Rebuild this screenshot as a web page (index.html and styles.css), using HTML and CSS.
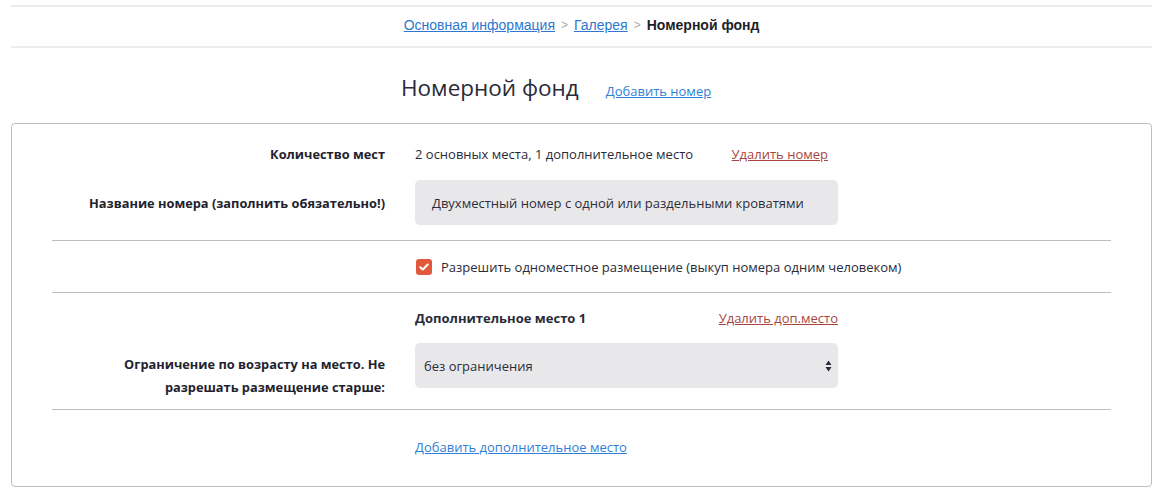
FILE: index.html
```html
<!DOCTYPE html>
<html lang="ru">
<head>
<meta charset="utf-8">
<link rel="stylesheet" href="styles.css">
</head>
<body>
<div class="page">
  <nav class="crumbs">
    <a href="#">Основная информация</a><span class="sep">&gt;</span><a href="#">Галерея</a><span class="sep">&gt;</span><b>Номерной фонд</b>
  </nav>
  <div class="head">
    <h1>Номерной фонд</h1>
    <a href="#" class="link">Добавить номер</a>
  </div>
  <section class="card">
    <div class="block first">
      <div class="row">
        <div class="label">Количество мест</div>
        <div class="value split"><span>2 основных места, 1 дополнительное место</span><a href="#" class="del">Удалить номер</a></div>
      </div>
      <div class="row">
        <div class="label">Название номера (заполнить обязательно!)</div>
        <div class="value"><div class="field">Двухместный номер с одной или раздельными кроватями</div></div>
      </div>
    </div>
    <div class="block check-block">
      <div class="row">
        <div class="label"></div>
        <label class="value check"><span class="box"><svg width="10" height="8" viewBox="0 0 10 8"><path d="M1.3 4.2 L3.8 6.5 L8.7 1.5" fill="none" stroke="#fff" stroke-width="2" stroke-linecap="round" stroke-linejoin="round"/></svg></span>Разрешить одноместное размещение (выкуп номера одним человеком)</label>
      </div>
    </div>
    <div class="block extra">
      <div class="row">
        <div class="label"></div>
        <div class="value split full"><b>Дополнительное место 1</b><a href="#" class="del">Удалить доп.место</a></div>
      </div>
      <div class="row">
        <div class="label two">Ограничение по возрасту на место. Не разрешать размещение старше:</div>
        <div class="value"><div class="field select">без ограничения<svg class="arrows" width="7" height="12" viewBox="0 0 7 12"><path d="M3.5 0.5 L6.5 5 L0.5 5 Z M3.5 11.5 L6.5 7 L0.5 7 Z" fill="#2b2b38"/></svg></div></div>
      </div>
    </div>
    <div class="block last">
      <div class="row">
        <div class="label"></div>
        <div class="value"><a href="#" class="link">Добавить дополнительное место</a></div>
      </div>
    </div>
  </section>
</div>
</body>
</html>
```
FILE: styles.css
```css
* { box-sizing: border-box; }
body {
  margin: 0;
  background: #fff;
  font-family: "Open Sans", "Noto Sans", sans-serif;
  color: #2b2b38;
  font-size: 13px;
}
.page {
  padding: 5px 11px 0 11px;
}
.crumbs {
  border-top: 2px solid #ececec;
  border-bottom: 2px solid #ececec;
  height: 43px;
  display: flex;
  justify-content: center;
  align-items: center;
  font-family: "Liberation Sans", Arial, sans-serif;
  font-size: 14px;
  padding-bottom: 3px;
}
.crumbs a { color: #2f78d1; }
.crumbs .sep { color: #a9a9a9; margin: 0 6px; font-size: 12px; }
.crumbs b { color: #1e1e28; }
.head {
  display: flex;
  align-items: baseline;
  padding-left: 390px;
  height: 75px;
  padding-top: 24px;
}
h1 {
  margin: 0;
  font-weight: 400;
  font-size: 22.5px;
  color: #2a2a38;
}
.link {
  color: #2f7fd6;
  margin-left: 27px;
  font-size: 13px;
}
.value .link { margin-left: 0; }
.card {
  border: 1px solid #bdbdc2;
  border-radius: 4px;
  padding: 0 40px;
  height: 364px;
}
.block {
  border-bottom: 1px solid #bdbdc2;
  display: flex;
  flex-direction: column;
}
.block.first { padding: 21px 0 15px; gap: 17px; }
.check-block { padding: 17px 0 16px; }
.block.extra { padding: 16px 0 0; gap: 16px; }
.block.last { border-bottom: none; padding-top: 28px; }
.row {
  display: grid;
  grid-template-columns: 333px 423px;
  column-gap: 30px;
  align-items: center;
  line-height: 18px;
}
.label {
  text-align: right;
  font-weight: 700;
  font-size: 12.8px;
  color: #22222e;
}
.label.two { line-height: 23px; align-self: start; padding: 10px 0 10px; }
.split {
  display: flex;
  justify-content: space-between;
  padding-right: 10px;
}
.split.full { padding-right: 0; }
.del { color: #a8453f; }
.field {
  background: #e8e8eb;
  border-radius: 5px;
  height: 45px;
  display: flex;
  align-items: center;
  padding: 0 17px;
  color: #2d2d3a;
}
.select {
  align-self: start;
  padding: 0 6px 0 9px;
  justify-content: space-between;
}
.extra .row:last-child { align-items: start; }
.check {
  display: flex;
  align-items: center;
  gap: 9px;
  color: #2b2b38;
  white-space: nowrap;
}
.box {
  flex: none;
  width: 16px;
  height: 16px;
  border-radius: 3px;
  background: #e0593c;
  display: flex;
  align-items: center;
  justify-content: center;
  margin-left: 1px;
}
```
